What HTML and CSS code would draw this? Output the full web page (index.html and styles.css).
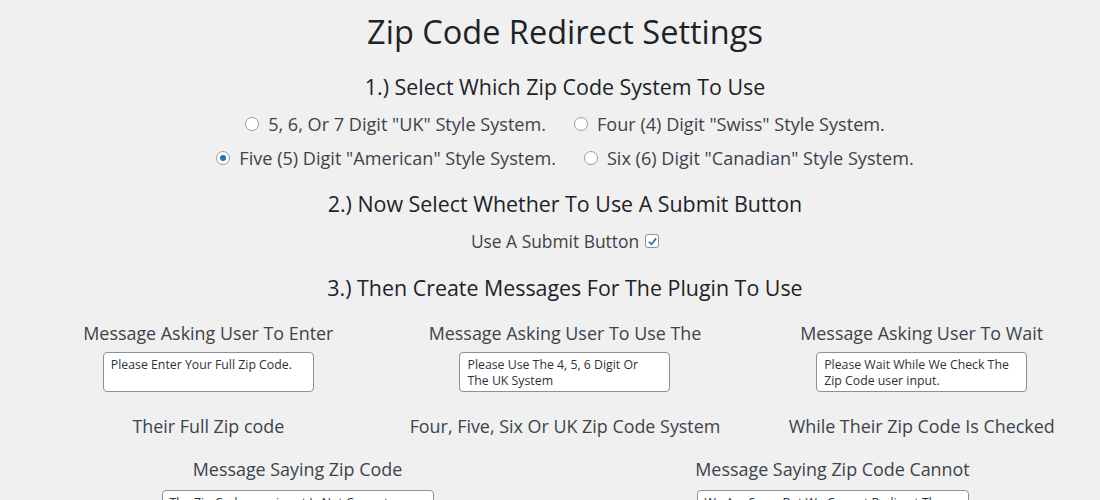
FILE: index.html
```html
<!DOCTYPE html>
<html>
<head>
<meta charset="utf-8">
<link rel="stylesheet" href="styles.css">
</head>
<body>
<div class="wrap">
  <h1 class="title">Zip Code Redirect Settings</h1>

  <h2 class="step step1">1.) Select Which Zip Code System To Use</h2>
  <div class="radio-row">
    <label class="opt"><span class="radio"></span>5, 6, Or 7 Digit "UK" Style System.</label>
    <label class="opt"><span class="radio"></span>Four (4) Digit "Swiss" Style System.</label>
  </div>
  <div class="radio-row">
    <label class="opt"><span class="radio checked"></span>Five (5) Digit "American" Style System.</label>
    <label class="opt"><span class="radio"></span>Six (6) Digit "Canadian" Style System.</label>
  </div>

  <h2 class="step step2">2.) Now Select Whether To Use A Submit Button</h2>
  <div class="check-row">
    <label class="opt chk">Use A Submit Button<span class="check"><svg viewBox="0 0 12 12" width="11" height="11"><path d="M2 6.3 L4.8 9 L10 2.6" fill="none" stroke="#2271b1" stroke-width="1.8"/></svg></span></label>
  </div>

  <h2 class="step step3">3.) Then Create Messages For The Plugin To Use</h2>

  <div class="grid3">
    <div class="field">
      <div class="flabel">Message Asking User To Enter</div>
      <div class="ta ta-s">Please Enter Your Full Zip Code.</div>
      <div class="flabel below">Their Full Zip code</div>
    </div>
    <div class="field">
      <div class="flabel">Message Asking User To Use The</div>
      <div class="ta ta-s">Please Use The 4, 5, 6 Digit Or The UK System</div>
      <div class="flabel below">Four, Five, Six Or UK Zip Code System</div>
    </div>
    <div class="field">
      <div class="flabel">Message Asking User To Wait</div>
      <div class="ta ta-s">Please Wait While We Check The Zip Code user input.</div>
      <div class="flabel below">While Their Zip Code Is Checked</div>
    </div>
  </div>

  <div class="grid2">
    <div class="field">
      <div class="flabel">Message Saying Zip Code</div>
      <div class="ta ta-l">The Zip Code user input Is Not Correct.</div>
    </div>
    <div class="field">
      <div class="flabel">Message Saying Zip Code Cannot</div>
      <div class="ta ta-l">We Are Sorry But We Cannot Redirect The Zip Code user input.</div>
    </div>
  </div>
</div>
</body>
</html>
```

FILE: styles.css
```css
html, body {
  margin: 0;
  padding: 0;
  background: #f0f0f1;
  overflow: hidden;
}
body {
  font-family: "Open Sans", "Noto Sans", sans-serif;
  color: #3c434a;
}
.wrap {
  padding-left: 30px;
  text-align: center;
}
.title {
  margin: 0;
  padding-top: 10px;
  font-size: 32.5px;
  font-weight: 400;
  color: #1d2327;
  line-height: 44px;
}
.step {
  margin: 0;
  font-size: 21.4px;
  font-weight: 400;
  color: #1d2327;
  line-height: 28px;
}
.step1 {
  margin-top: 19px;
}
.step2 {
  margin-top: 21px;
}
.step3 {
  margin-top: 22px;
}
.radio-row {
  display: flex;
  justify-content: center;
  gap: 28px;
  font-size: 18.1px;
  line-height: 22px;
  margin-top: 12px;
}
.opt {
  display: inline-flex;
  align-items: center;
  gap: 9px;
}
.radio {
  width: 12px;
  height: 12px;
  border: 1px solid #9a9da1;
  border-radius: 50%;
  background: #fff;
  position: relative;
  flex: none;
}
.radio.checked::after {
  content: "";
  position: absolute;
  left: 3px;
  top: 3px;
  width: 6px;
  height: 6px;
  border-radius: 50%;
  background: #2271b1;
}
.check-row {
  font-size: 17.4px;
  line-height: 22px;
  margin-top: 12px;
}
.opt.chk {
  gap: 6px;
}
.check {
  width: 12px;
  height: 12px;
  border: 1px solid #8c8f94;
  border-radius: 3px;
  background: #fff;
  display: inline-flex;
  align-items: center;
  justify-content: center;
  flex: none;
}
.grid3 {
  display: grid;
  grid-template-columns: 1fr 1fr 1fr;
  margin-top: 19px;
}
.grid2 {
  display: grid;
  grid-template-columns: 1fr 1fr;
  margin-top: 19px;
}
.field {
  display: flex;
  flex-direction: column;
  align-items: center;
}
.flabel {
  font-size: 17.9px;
  line-height: 24px;
  color: #3c434a;
}
.flabel.below {
  margin-top: 22px;
}
.ta {
  margin-top: 7px;
  height: 40px;
  box-sizing: border-box;
  border: 1px solid #8c8f94;
  border-radius: 4px;
  background: #fff;
  text-align: left;
  font-size: 12.3px;
  line-height: 16px;
  color: #2c3338;
  padding: 4px 10px 3px 7px;
}
.grid2 .ta {
  margin-top: 9px;
}
.ta-s {
  width: 211px;
}
.ta-l {
  width: 272px;
}
```
